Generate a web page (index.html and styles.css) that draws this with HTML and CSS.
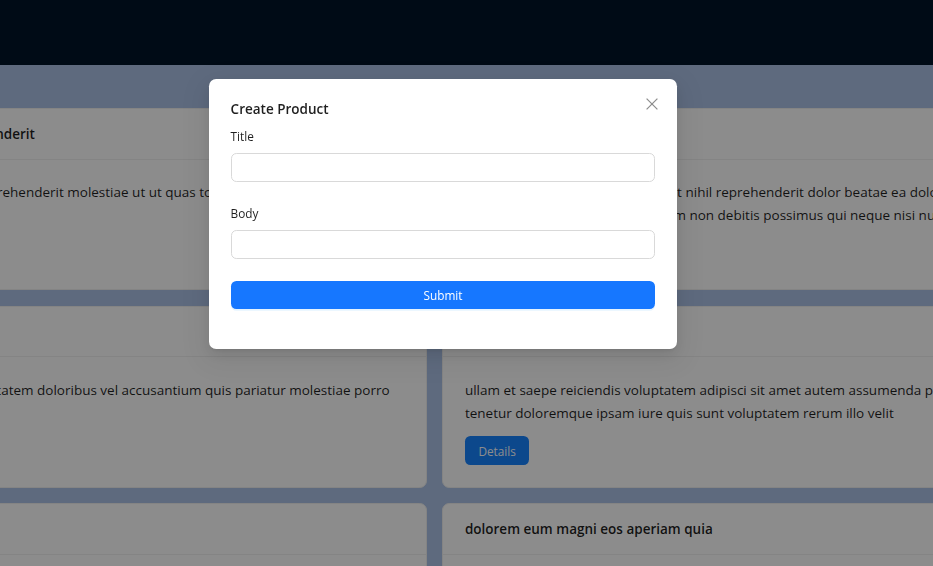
FILE: index.html
```html
<!DOCTYPE html>
<html lang="en">
<head>
<meta charset="utf-8">
<title>Products</title>
<link rel="stylesheet" href="styles.css">
</head>
<body>
<header class="topbar"></header>
<main class="content">
  <div class="grid">
    <article class="card">
      <div class="card-head">sunt aut facere repellat provident occaecati excepturi optio reprehenderit</div>
      <div class="card-body">
        <p class="card-text">quia et suscipit suscipit recusandae consequuntur expedita et cum reprehenderit molestiae ut ut quas totam nostrum rerum est autem sunt<br>rem eveniet architecto</p>
        <button class="btn-details">Details</button>
      </div>
    </article>
    <article class="card">
      <div class="card-head">qui est esse</div>
      <div class="card-body">
        <p class="card-text">est rerum tempore vitae sequi sint nihil reprehenderit dolor beatae ea dolores neque fugiat blanditiis voluptate porro vel nihil<br>molestiae ut reiciendis qui aperiam non debitis possimus qui neque nisi nulla</p>
        <button class="btn-details">Details</button>
      </div>
    </article>
    <article class="card">
      <div class="card-head">ea molestias quasi exercitationem repellat qui ipsa sit aut</div>
      <div class="card-body">
        <p class="card-text">et iusto sed quo iure voluptatem occaecati omnis eligendi aut ad voluptatem doloribus vel accusantium quis pariatur molestiae porro<br>eius odio et labore et velit aut</p>
        <button class="btn-details">Details</button>
      </div>
    </article>
    <article class="card">
      <div class="card-head">eum et est occaecati</div>
      <div class="card-body">
        <p class="card-text">ullam et saepe reiciendis voluptatem adipisci sit amet autem assumenda provident rerum culpa quis hic commodi nesciunt rem<br>tenetur doloremque ipsam iure quis sunt voluptatem rerum illo velit</p>
        <button class="btn-details">Details</button>
      </div>
    </article>
    <article class="card">
      <div class="card-head">nesciunt quas odio</div>
      <div class="card-body">
        <p class="card-text">repudiandae veniam quaerat sunt sed alias aut fugiat sit autem sed est voluptatem omnis possimus esse voluptatibus quis<br>est aut tenetur dolor neque</p>
        <button class="btn-details">Details</button>
      </div>
    </article>
    <article class="card">
      <div class="card-head">dolorem eum magni eos aperiam quia</div>
      <div class="card-body">
        <p class="card-text">ut aspernatur corporis harum nihil quis provident sequi mollitia nobis aliquid molestiae perspiciatis et ea nemo ab reprehenderit<br>accusantium quas voluptate dolores velit et doloremque molestiae</p>
        <button class="btn-details">Details</button>
      </div>
    </article>
  </div>
</main>

<div class="mask"></div>

<div class="modal" role="dialog" aria-labelledby="modal-title">
  <button class="modal-close" aria-label="Close">
    <svg width="12" height="12" viewBox="0 0 12 12" aria-hidden="true">
      <path d="M0.6 0.6 L11.4 11.4 M11.4 0.6 L0.6 11.4" stroke="rgba(0,0,0,0.45)" stroke-width="1.25" fill="none"/>
    </svg>
  </button>
  <div class="modal-title" id="modal-title">Create Product</div>
  <form class="form">
    <div class="form-item">
      <label class="form-label" for="title">Title</label>
      <input class="form-input" id="title" type="text">
    </div>
    <div class="form-item">
      <label class="form-label" for="body">Body</label>
      <input class="form-input" id="body" type="text">
    </div>
    <div class="form-item">
      <button class="btn-submit" type="button">Submit</button>
    </div>
  </form>
</div>
</body>
</html>
```
FILE: styles.css
```css
* { box-sizing: border-box; }

html, body {
  margin: 0;
  height: 100%;
  overflow: hidden;
}

body {
  font-family: "Open Sans", "Noto Sans", sans-serif;
  color: rgba(0, 0, 0, 0.88);
  background: #abc1e5;
  display: flex;
  flex-direction: column;
}

.topbar {
  height: 65px;
  flex: none;
  background: #001529;
}

.content {
  flex: 1;
  background: #abc1e5;
  padding-top: 43.3px;
  overflow: hidden;
}

.grid {
  display: grid;
  grid-template-columns: 896.2px 896.2px;
  column-gap: 15.6px;
  row-gap: 15.6px;
  margin-left: -469.5px;
  width: max-content;
}

.card {
  background: #fff;
  border: 1px solid #f0f0f0;
  border-radius: 7.2px;
  overflow: hidden;
}

.card-head {
  min-height: 50.4px;
  padding: 0 21.6px;
  border-bottom: 1px solid #f0f0f0;
  display: flex;
  align-items: center;
  font-size: 13.5px;
  font-weight: 600;
  white-space: nowrap;
}

.card-body {
  padding: 21.6px;
}

.card-text {
  margin: 0 0 11.5px;
  font-size: 13.5px;
  line-height: 23px;
  white-space: nowrap;
}

.btn-details {
  display: block;
  height: 28.8px;
  padding: 0 13.5px;
  border: none;
  border-radius: 5.4px;
  background: #1783ff;
  color: #fff;
  font-family: inherit;
  font-size: 11.8px;
}

.mask {
  position: fixed;
  inset: 0;
  background: rgba(0, 0, 0, 0.45);
}

.modal {
  position: absolute;
  left: 209px;
  top: 79px;
  width: 468px;
  padding: 19.5px 21.6px 18px;
  background: #fff;
  border-radius: 7.2px;
  box-shadow: 0 5.4px 14.4px 0 rgba(0, 0, 0, 0.08),
              0 2.7px 5.4px -3.6px rgba(0, 0, 0, 0.12),
              0 8.1px 25.2px 7.2px rgba(0, 0, 0, 0.05);
}

.modal-close {
  position: absolute;
  top: 15.3px;
  right: 15.3px;
  width: 19.8px;
  height: 19.8px;
  padding: 0;
  border: none;
  background: transparent;
  display: flex;
  align-items: center;
  justify-content: center;
}

.modal-title {
  font-size: 13.5px;
  font-weight: 600;
  line-height: 21.6px;
  margin-bottom: 5.7px;
}

.form-item {
  margin-bottom: 21.6px;
}

.form-label {
  display: block;
  font-size: 11.8px;
  line-height: 19.8px;
  padding-top: 1px;
  padding-bottom: 6.2px;
}

.form-input {
  display: block;
  width: 100%;
  height: 28.8px;
  border: 1px solid #d9d9d9;
  border-radius: 5.4px;
  background: #fff;
  font-family: inherit;
  font-size: 12.6px;
  padding: 0 10px;
  outline: none;
}

.btn-submit {
  display: block;
  width: 100%;
  height: 28.8px;
  border: none;
  border-radius: 5.4px;
  background: #1677ff;
  color: #fff;
  font-family: inherit;
  font-size: 11.8px;
  box-shadow: 0 1.8px 0 rgba(5, 145, 255, 0.1);
}
```
